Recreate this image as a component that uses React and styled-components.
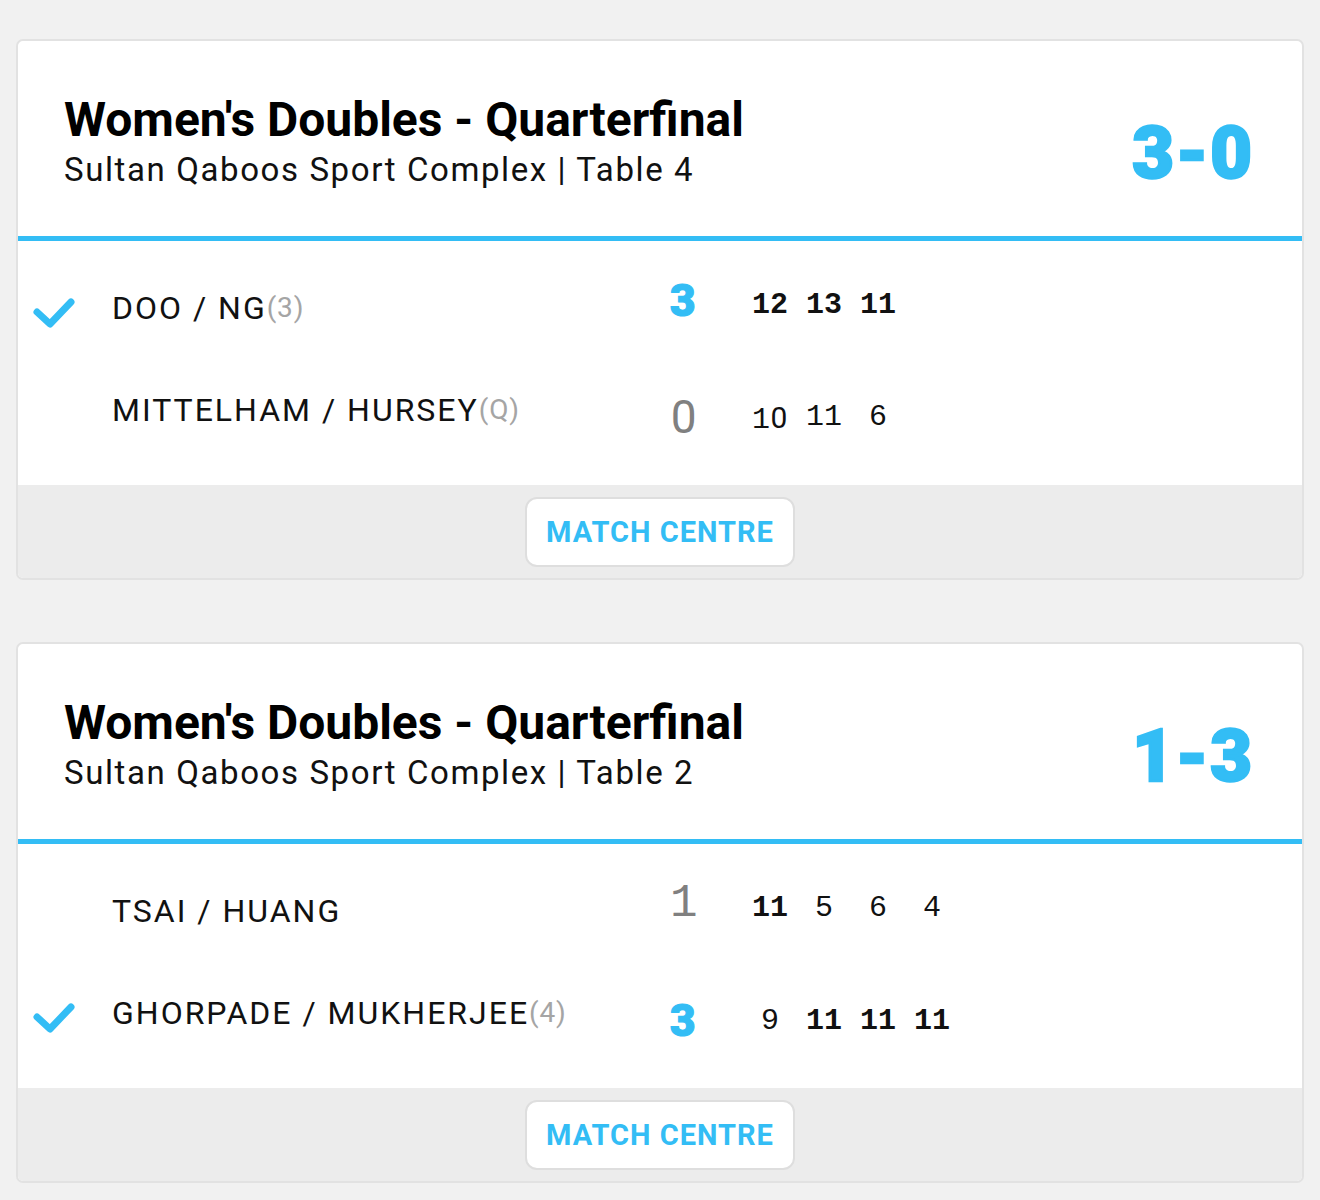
import React from "react";
import styled, { createGlobalStyle } from "styled-components";

const Global = createGlobalStyle`
  html, body { margin: 0; padding: 0; }
  body {
    background: #f1f1f1;
    font-family: Roboto, "Noto Sans", sans-serif;
    color: #111;
  }
`;

const Page = styled.div`
  padding: 39px 16px 16px 16px;
  display: flex;
  flex-direction: column;
  gap: 62px;
  width: 1288px;
`;

const Card = styled.section`
  border: 2px solid #e2e2e2;
  border-radius: 7px;
  background: #fff;
  overflow: hidden;
`;

const Header = styled.header`
  height: 200px;
  box-sizing: border-box;
  border-bottom: 5px solid #33bdf5;
  display: flex;
  align-items: center;
  justify-content: space-between;
  padding: 0 48px 0 46px;
`;

const Titles = styled.div`
  display: flex;
  flex-direction: column;
  margin-top: 5px;
`;

const Title = styled.h2`
  margin: 0;
  font-family: Roboto, sans-serif;
  font-weight: 700;
  font-size: 48px;
  line-height: 52px;
  color: #000;
  letter-spacing: 0;
`;

const Sub = styled.div`
  margin-top: 5px;
  font-family: Roboto, sans-serif;
  font-size: 33px;
  line-height: 38px;
  letter-spacing: 1.6px;
  color: #111;
`;

const BigScore = styled.div`
  font-family: Roboto, sans-serif;
  font-weight: 900;
  font-size: 72px;
  color: #33bdf5;
  -webkit-text-stroke: 2.5px #33bdf5;
  letter-spacing: 2px;
  margin-top: 30px;
`;

const Rows = styled.div`
  display: flex;
  flex-direction: column;
  padding: 16px 0 24px;
`;

const Row = styled.div`
  display: grid;
  grid-template-columns: 94px 540px 91px auto;
  align-items: center;
  height: 102px;
`;

const CheckCell = styled.div`
  display: flex;
  justify-content: flex-start;
  padding-left: 13px;
  padding-top: 9px;
`;

const Name = styled.div`
  font-family: Roboto, sans-serif;
  font-size: 32px;
  letter-spacing: 2px;
  color: #111;
`;

const Seed = styled.span`
  font-size: 28px;
  color: #a5a5a5;
  letter-spacing: 0.8px;
  position: relative;
  top: -2px;
`;

const SetScore = styled.div`
  font-family: ${(p) => (p.$win ? "Roboto, sans-serif" : '"Liberation Mono", monospace')};
  font-weight: ${(p) => (p.$win ? 900 : 400)};
  font-size: ${(p) => (p.$win ? "44px" : "46px")};
  color: ${(p) => (p.$win ? "#33bdf5" : "#808080")};
  -webkit-text-stroke: ${(p) => (p.$win ? "1.2px #33bdf5" : "0")};
  padding-left: 18px;
  margin-top: ${(p) => (p.$up ? "-14px" : "16px")};
`;

const Games = styled.div`
  display: flex;
  margin-top: ${(p) => (p.$up ? "-6px" : "16px")};
`;

const Game = styled.div`
  width: 54px;
  text-align: center;
  font-family: "Liberation Mono", monospace;
  font-size: 30px;
  font-weight: ${(p) => (p.$win ? 700 : 400)};
  color: #111;
`;

const Zero = styled.span`
  font-family: Roboto, sans-serif;
  font-weight: ${(p) => (p.$bold ? 700 : 400)};
  display: inline-block;
  width: 0.6em;
  text-align: center;
`;

const Footer = styled.footer`
  background: #ececec;
  height: 93px;
  display: flex;
  align-items: center;
  justify-content: center;
`;

const Button = styled.button`
  width: 270px;
  height: 70px;
  background: #fff;
  border: 2px solid #dedede;
  border-radius: 12px;
  font-family: Roboto, sans-serif;
  font-weight: 700;
  font-size: 29px;
  letter-spacing: 1px;
  color: #33bdf5;
  cursor: pointer;
  padding: 0;
`;

const Check = () => (
  <svg width="46" height="36" viewBox="0 0 46 36">
    <path
      d="M6 17 L19 29 L40 7"
      fill="none"
      stroke="#33bdf5"
      strokeWidth="7"
      strokeLinecap="round"
      strokeLinejoin="round"
    />
  </svg>
);

// Digits in a plain-zero style: the mono face's zero is dotted, so zeros use Roboto.
const Num = ({ value, bold }) =>
  String(value)
    .split("")
    .map((c, i) => (c === "0" ? <Zero key={i} $bold={bold}>0</Zero> : <React.Fragment key={i}>{c}</React.Fragment>));

const matches = [
  {
    table: 4,
    score: "3-0",
    players: [
      { name: "DOO / NG", seed: "(3)", win: true, sets: 3, games: [[12, 1], [13, 1], [11, 1]], up: true },
      { name: "MITTELHAM / HURSEY", seed: "(Q)", win: false, sets: 0, games: [[10, 0], [11, 0], [6, 0]] },
    ],
  },
  {
    table: 2,
    score: "1-3",
    players: [
      { name: "TSAI / HUANG", seed: "", win: false, sets: 1, games: [[11, 1], [5, 0], [6, 0], [4, 0]], up: true },
      { name: "GHORPADE / MUKHERJEE", seed: "(4)", win: true, sets: 3, games: [[9, 0], [11, 1], [11, 1], [11, 1]] },
    ],
  },
];

export default function App() {
  return (
    <>
      <Global />
      <Page>
        {matches.map((m, i) => (
          <Card key={i}>
            <Header>
              <Titles>
                <Title>Women's Doubles - Quarterfinal</Title>
                <Sub>Sultan Qaboos Sport Complex | Table {m.table}</Sub>
              </Titles>
              <BigScore>{m.score}</BigScore>
            </Header>
            <Rows>
              {m.players.map((p, j) => (
                <Row key={j}>
                  <CheckCell>{p.win ? <Check /> : null}</CheckCell>
                  <Name>
                    {p.name}
                    {p.seed && <Seed>{p.seed}</Seed>}
                  </Name>
                  <SetScore $win={p.win} $up={p.up}>
                    {p.win ? p.sets : <Num value={p.sets} />}
                  </SetScore>
                  <Games $up={p.up}>
                    {p.games.map(([g, w], k) => (
                      <Game key={k} $win={!!w}>
                        <Num value={g} bold={!!w} />
                      </Game>
                    ))}
                  </Games>
                </Row>
              ))}
            </Rows>
            <Footer>
              <Button>MATCH CENTRE</Button>
            </Footer>
          </Card>
        ))}
      </Page>
    </>
  );
}
